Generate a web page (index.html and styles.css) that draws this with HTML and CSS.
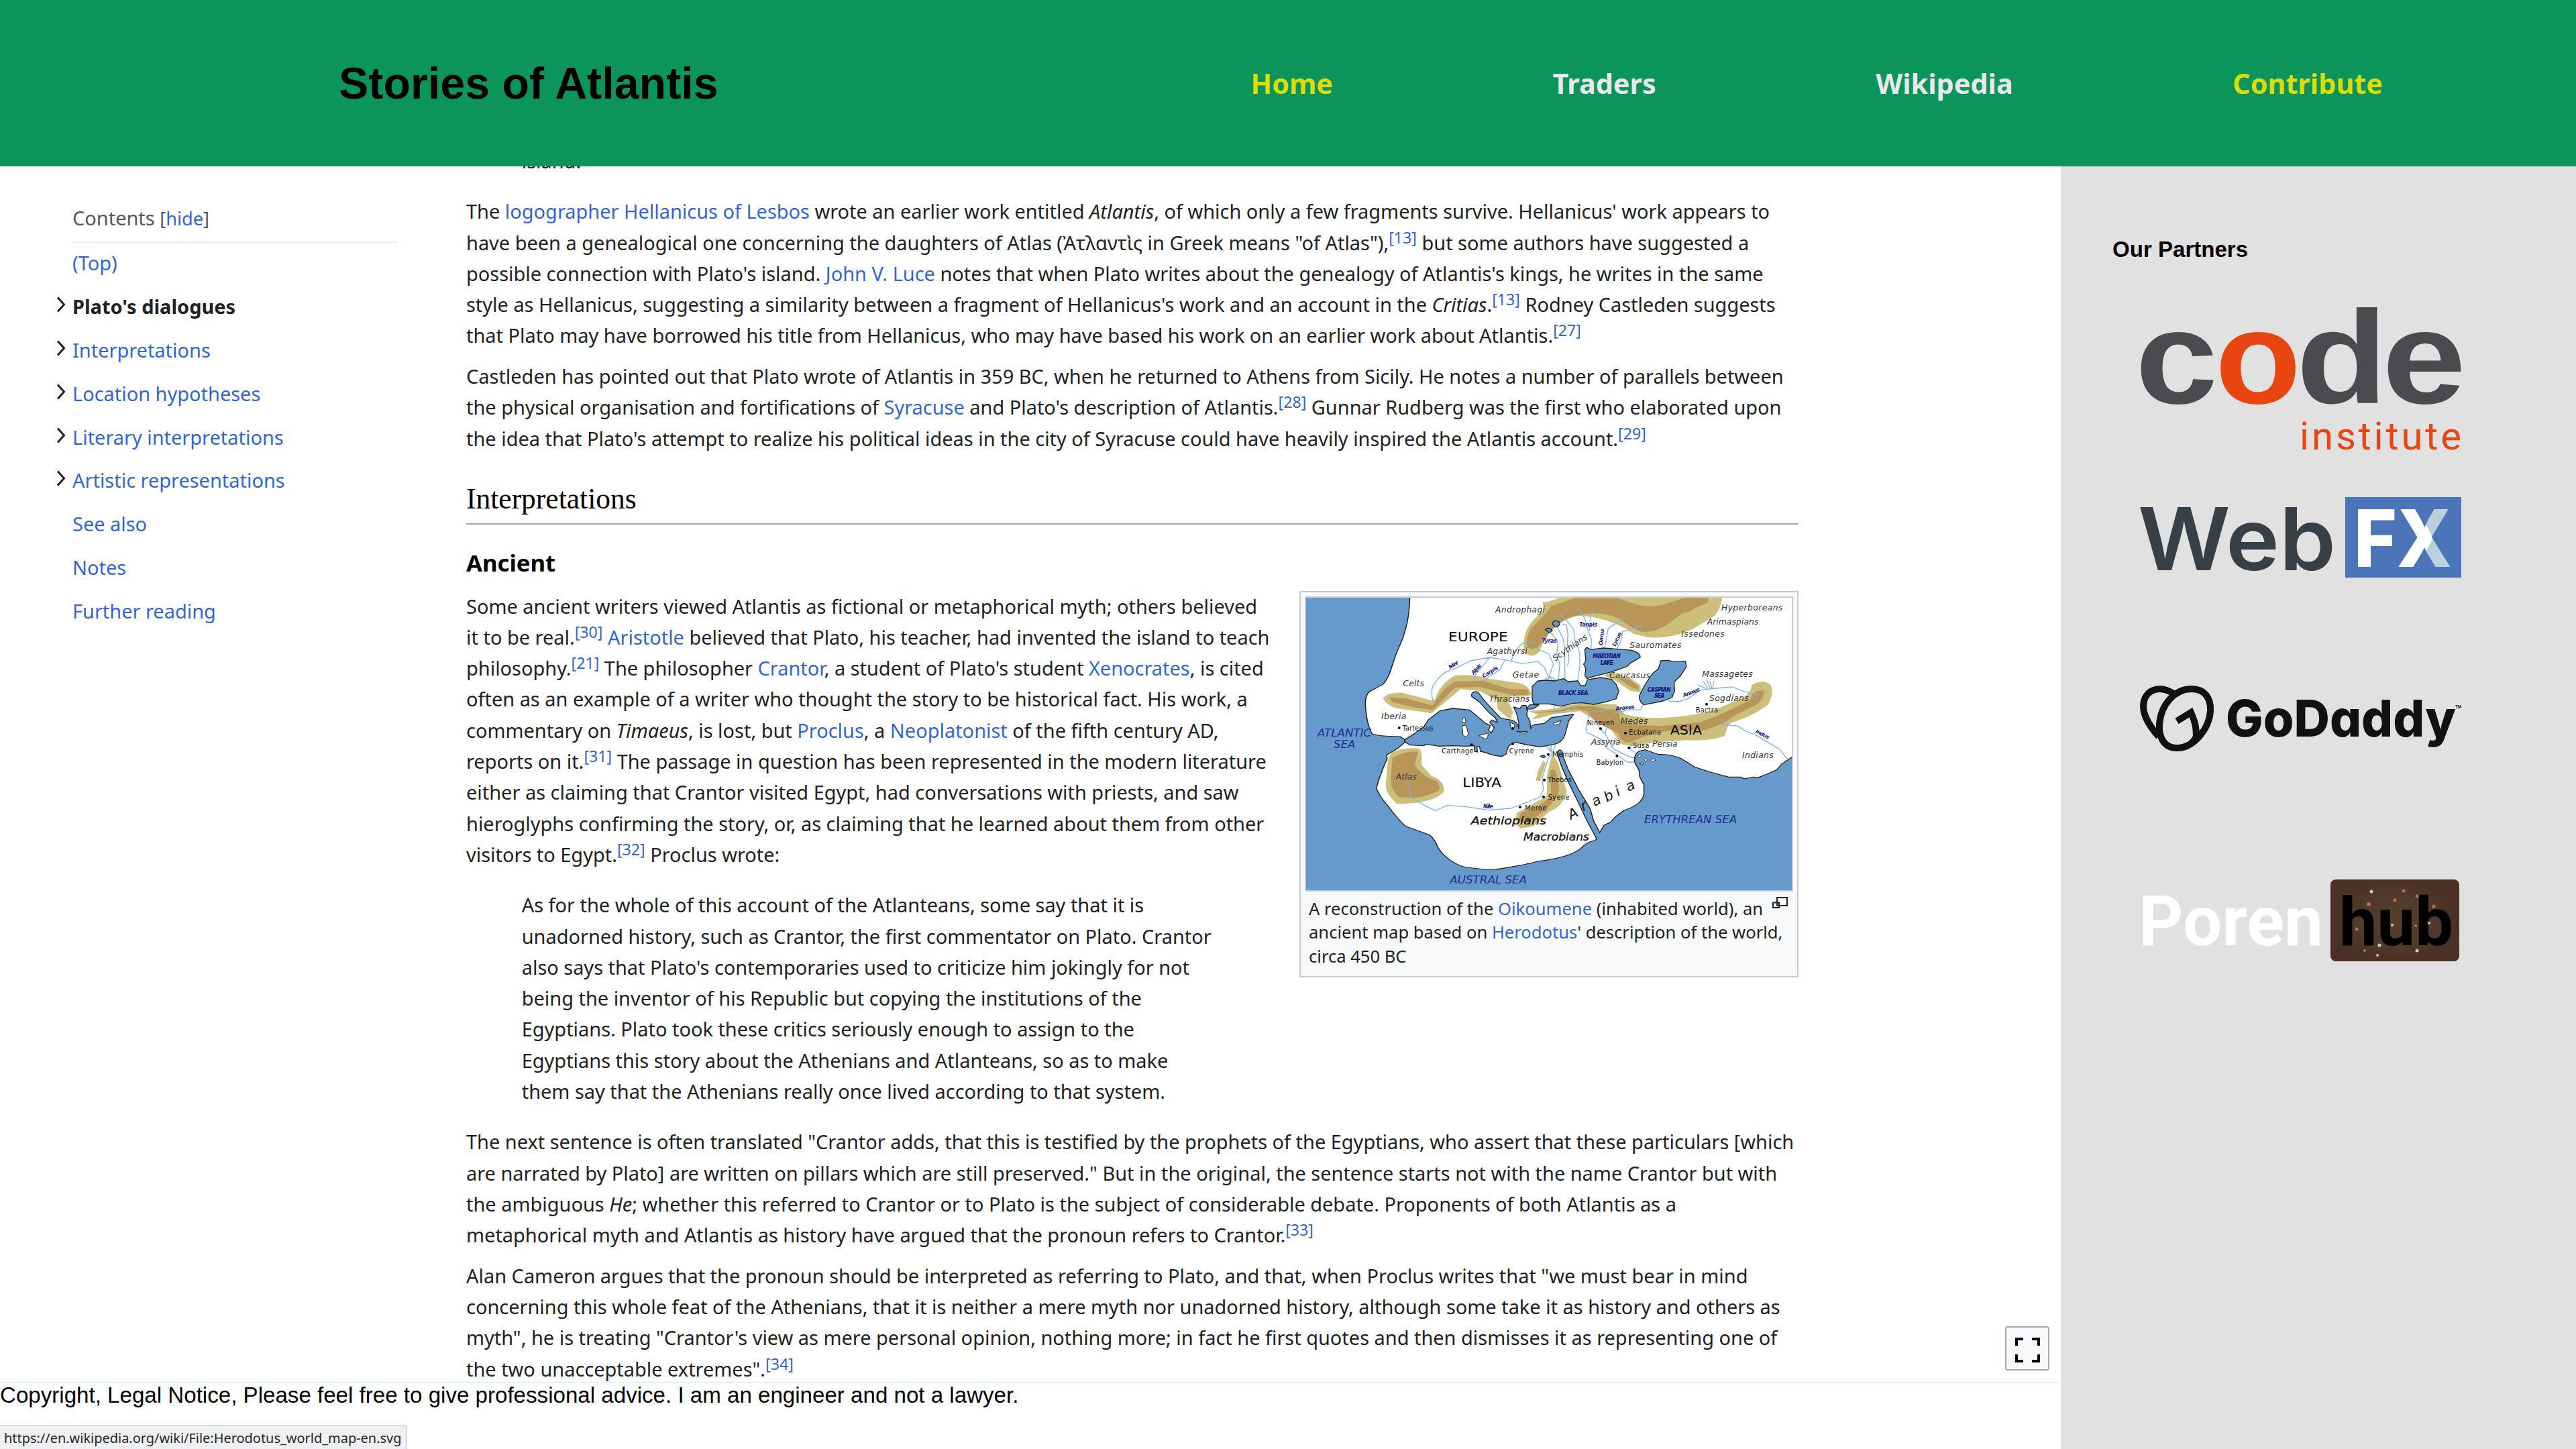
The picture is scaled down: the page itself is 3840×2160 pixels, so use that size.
FILE: index.html
```html
<!DOCTYPE html>
<html lang="en">
<head>
<meta charset="utf-8">
<title>Stories of Atlantis</title>
<link rel="stylesheet" href="styles.css">
</head>
<body>
<header class="top">
  <h1 class="brand">Stories of Atlantis</h1>
  <nav class="nav">
    <a class="nav-link accent">Home</a>
    <a class="nav-link">Traders</a>
    <a class="nav-link">Wikipedia</a>
    <a class="nav-link accent">Contribute</a>
  </nav>
</header>
<div class="page">
  <div class="main">
    <div class="reader">
      <aside class="toc">
        <div class="toc-head">Contents <span class="br">[<a>hide</a>]</span></div>
        <ul class="toc-list">
          <li><a>(Top)</a></li>
          <li class="current"><svg class="chev" viewBox="0 0 14 24"><path d="M2 1.5 11.5 12 2 22.5"/></svg>Plato's dialogues</li>
          <li><svg class="chev" viewBox="0 0 14 24"><path d="M2 1.5 11.5 12 2 22.5"/></svg><a>Interpretations</a></li>
          <li><svg class="chev" viewBox="0 0 14 24"><path d="M2 1.5 11.5 12 2 22.5"/></svg><a>Location hypotheses</a></li>
          <li><svg class="chev" viewBox="0 0 14 24"><path d="M2 1.5 11.5 12 2 22.5"/></svg><a>Literary interpretations</a></li>
          <li><svg class="chev" viewBox="0 0 14 24"><path d="M2 1.5 11.5 12 2 22.5"/></svg><a>Artistic representations</a></li>
          <li><a>See also</a></li>
          <li><a>Notes</a></li>
          <li><a>Further reading</a></li>
        </ul>
      </aside>
      <article class="article">
        <blockquote class="cut">island.</blockquote>
        <p>The <a>logographer Hellanicus of Lesbos</a> wrote an earlier work entitled <i>Atlantis</i>, of which only a few fragments survive. Hellanicus' work appears to<br>
        have been a genealogical one concerning the daughters of Atlas (Ἀτλαντὶς in Greek means "of Atlas"),<sup>[13]</sup> but some authors have suggested a<br>
        possible connection with Plato's island. <a>John V. Luce</a> notes that when Plato writes about the genealogy of Atlantis's kings, he writes in the same<br>
        style as Hellanicus, suggesting a similarity between a fragment of Hellanicus's work and an account in the <i>Critias</i>.<sup>[13]</sup> Rodney Castleden suggests<br>
        that Plato may have borrowed his title from Hellanicus, who may have based his work on an earlier work about Atlantis.<sup>[27]</sup></p>
        <p>Castleden has pointed out that Plato wrote of Atlantis in 359 BC, when he returned to Athens from Sicily. He notes a number of parallels between<br>
        the physical organisation and fortifications of <a>Syracuse</a> and Plato's description of Atlantis.<sup>[28]</sup> Gunnar Rudberg was the first who elaborated upon<br>
        the idea that Plato's attempt to realize his political ideas in the city of Syracuse could have heavily inspired the Atlantis account.<sup>[29]</sup></p>
        <h2>Interpretations</h2>
        <h3>Ancient</h3>
        <figure class="thumb">
          <svg class="map" viewBox="0 0 2172 1308">
            <rect class="water" width="2172" height="1308"/>
            <g transform="scale(1.5306 1.1862) translate(-55 -79)">
              <path class="land" d="M358 70C357 150 348 200 330 255C305 320 305 370 280 405L240 433Q228 445 228 480Q232 560 248 592Q265 602 330 603L344 615L343 624L325 645L290 672L292 685Q270 750 260 797Q270 830 295 865Q320 910 345 940L415 973Q432 990 440 1020Q460 1065 510 1092Q560 1105 610 1103Q700 1085 730 1073Q820 1060 855 1027Q875 1000 890 997Q905 993 903 985L890 955L870 905L850 850L820 770L800 710L790 670Q790 652 797 653Q805 655 805 675L820 725L850 800L885 875L895 920L913 965L925 937L945 925Q955 905 985 880Q1035 860 1042 820L1042 785L1030 755L1028 730L1015 700Q1012 665 1030 657L1045 652L1085 670Q1120 668 1150 685L1190 717L1240 738L1290 755L1325 755L1335 762L1360 755L1375 757L1400 745L1430 728L1445 705L1480 675V70Z"/>
            </g>
            <g transform="translate(216 267)">
              <path class="hill" d="M128 182Q150 155 215 158L345 192L360 190Q380 120 450 80Q540 75 600 95L740 115Q785 130 790 165Q780 180 700 175L690 200L710 245L700 268L722 272L690 274L640 230L635 190L560 150L475 142L345 250L210 230Q150 225 128 182Z"/>
              <path class="peak" d="M155 178L230 182L350 215Q400 130 450 108L580 105L690 140L770 143Q785 155 775 168L700 168L560 132L450 135L350 235L260 222L170 200Z"/>
              <path class="hill" d="M165 425Q230 400 290 408Q305 420 300 480L345 530Q405 550 400 600Q370 640 260 652L190 655Q140 610 140 570L150 460Z"/>
              <path class="peak" d="M170 450Q230 415 285 422L270 480Q300 530 370 555Q385 575 378 595Q310 630 250 628L200 625Q165 600 162 550Z"/>
              <path class="hill" d="M885 430L910 470L950 600Q930 670 870 690L800 755L740 765Q715 740 726 695L780 665L860 620L862 520Z M845 460L855 475L830 555L812 550L820 510Z"/>
              <path class="peak" d="M875 510Q890 490 900 510Q920 570 912 610L860 680L780 735Q740 745 735 720L745 695L830 660L880 620Z"/>
              <path class="river" d="M238 555L245 590L258 630L320 665L362 685L415 662L500 668L600 683L700 675L830 625L845 590L840 540L865 455L885 430M850 388L885 430L900 390M868 388L880 425L880 388"/>
              <path class="river" d="M355 205Q340 160 350 130Q380 80 410 65L450 50L520 15L605 0L670 10L750 28L820 18L850 45L870 90M535 108L540 80L585 25L605 0M582 112L590 95L650 55L675 8"/>
              <path class="lake" d="M225 368L270 340L310 310L330 280Q355 260 385 238L440 228L515 235L560 272L582 292L608 305L600 325L612 338L625 315L605 290L615 280L640 290L630 270L600 245L560 200L525 175Q520 153 545 153L555 158Q575 190 620 235L655 272L700 280Q720 285 730 300L735 320V290L725 250L712 222L740 230L750 215L768 215L775 235L770 255L785 285L788 320L795 305L810 300L850 295L880 270L925 262L980 255L958 285L942 345Q930 380 895 388L830 400L770 390L720 380L700 388Q685 395 680 430L660 443Q620 440 585 425L563 420L560 398H548L550 423L538 420L535 395L500 397L440 395L380 397L320 388L310 395L250 392L228 380Z"/>
              <path class="lake" d="M768 232L785 212L825 212L800 230Z M832 442L845 437L855 444L845 449Z"/>
              <path class="land" d="M482 305L500 303L510 345L498 357L485 345ZM482 290Q482 265 495 270Q500 290 495 294ZM556 350L598 338L596 360L585 365ZM695 290L718 300L712 320L700 315ZM725 330L775 332L760 339ZM888 295L925 282L915 300L895 303Z"/>
            </g>
            <g transform="translate(906 -3)">
              <path class="hill" d="M153 20L175 22L230 2H955Q945 60 920 85L820 145Q720 190 620 180L560 165Q480 110 400 95Q300 75 250 95Q170 150 140 240Q115 275 80 255Q60 240 70 180Q85 110 155 65Z"/>
              <path class="peak" d="M190 40Q240 25 290 5L490 5L560 30Q640 55 720 25L790 2H895L890 25L830 50L810 65L780 70L700 130Q650 160 600 155Q560 150 500 100Q420 60 330 78Q240 95 190 150L130 225Q100 245 80 215Q80 160 110 130L165 75Z"/>
              <path class="hill" d="M85 510L200 500L260 485L330 475L480 480L500 500L520 525Q620 550 760 535Q860 525 930 500L1050 450Q1090 420 1085 395Q1130 365 1170 390Q1190 430 1160 480Q1100 530 1000 560Q975 570 968 620Q900 645 800 640L640 650Q560 680 500 655L470 610L430 560L370 540L320 510L200 524L120 545H105L130 525Z"/>
              <path class="peak" d="M105 517L230 505L300 486L380 488L450 505L490 500L500 555Q600 580 700 575L860 560L980 510L1080 460Q1090 415 1140 418Q1145 450 1110 480L1030 520L950 570L880 595L700 600L600 625L540 650Q505 655 490 610L400 565L370 540L350 510L300 502L200 515Z"/>
              <path class="hill" d="M425 350L460 338L540 360L590 395L590 425L545 420L480 375Z"/>
              <path class="peak" d="M488 362L540 368L582 400L578 415L545 402Z"/>
              <path class="river" d="M110 200L60 208L20 250L12 290M110 225L180 255L200 300L180 360M185 155L220 200L215 260L228 300L222 370M215 130L245 190L250 230L252 370M222 72L260 105L290 145L295 190L318 250V310L308 375M240 120L258 125L265 170L262 200L270 280L262 310M305 42L340 95L355 150L370 190L368 235M378 55L365 85L362 150M515 95L445 140L430 225M598 127L510 155L500 200L483 232M160 375Q180 345 210 372M172 378L185 355L195 375"/>
              <path class="river" d="M205 485L203 515L230 515L295 495M460 500L420 508L362 512L345 590L350 605L420 640L440 675L530 738H562M470 522L540 503L590 505L600 482M385 550L410 590L430 610L470 680L530 710L560 720M430 615L440 575M500 620L470 650L460 675M552 648L545 680L565 695M715 465L760 468L800 455L860 415L930 408L1000 402L1050 422L1115 438M885 410L845 393M890 405L868 375M900 405L885 370M908 408L900 375M912 408L918 375M942 567L1025 577L1060 600L1110 620L1210 680L1247 725"/>
              <path class="lake" d="M105 400L130 375L165 372L205 375L245 365L265 378L310 375L322 396L342 396L352 370L410 360L460 368L480 390L493 420L480 455L430 470L380 480L330 473L290 475L235 488L180 478L110 478L105 450Z"/>
              <path class="lake" d="M340 235L350 225L365 235L425 228L480 232L550 238Q590 250 588 270L545 295L530 310L460 335L380 355L350 365L341 350L345 320L335 300L345 285Z"/>
              <path class="lake" d="M680 285L715 283L735 290L790 287L795 310L770 350L740 380L742 420L730 450L690 465L605 482Q580 465 585 440L605 400L640 345L670 320Z"/>
              <path class="lake" d="M212 106Q230 108 228 122L218 134H206L196 120Q198 106 212 106ZM163 145Q180 132 195 150L180 160Z"/>
              <path class="land" d="M575 712Q590 700 595 708L585 718ZM604 728Q612 718 624 726L612 736ZM634 730Q646 716 656 730L644 736ZM584 742L604 744L596 752Z"/>
              <g class="dots"><circle cx="411" cy="589" r="6"/><circle cx="522" cy="608" r="6"/><circle cx="538" cy="674" r="6"/><circle cx="484" cy="711" r="6"/><circle cx="885" cy="479" r="6"/><circle cx="177" cy="704" r="6"/><circle cx="159" cy="818" r="6"/><circle cx="156" cy="894" r="6"/><circle cx="51" cy="940" r="6"/><circle cx="18" cy="656" r="6"/><circle cx="-490" cy="585" r="6"/><circle cx="-166" cy="661" r="6"/><circle cx="18" cy="588" r="6"/></g>
              <g class="folk">
                <text x="-60" y="68" textLength="222">Androphagi</text>
                <text x="951" y="61" textLength="274">Hyperboreans</text>
                <text x="887" y="123" textLength="230">Arimaspians</text>
                <text x="772" y="176" textLength="193">Issedones</text>
                <text x="541" y="228" textLength="231">Sauromates</text>
                <text x="-97" y="256" textLength="180">Agathyrsi</text>
                <text x="17" y="361" textLength="118">Getae</text>
                <text x="450" y="362" textLength="182">Caucasus</text>
                <text x="865" y="356" textLength="226">Massagetes</text>
                <text x="897" y="464" textLength="176">Sogdians</text>
                <text x="-88" y="469" textLength="182">Thracians</text>
                <text x="500" y="568" textLength="122">Medes</text>
                <text x="369" y="661" textLength="131">Assyria</text>
                <text x="642" y="668" textLength="113">Persia</text>
                <text x="1044" y="720" textLength="140">Indians</text>
                <text x="-473" y="399" textLength="95">Celts</text>
                <text x="-570" y="547" textLength="112">Iberia</text>
                <text x="-505" y="815" textLength="94">Atlas</text>
                <text transform="translate(207 288)rotate(-35)" textLength="180">Scythians</text>
              </g>
              <g class="town">
                <text x="350" y="574" textLength="122">Nineveh</text>
                <text x="538" y="614" textLength="143">Ecbatana</text>
                <text x="555" y="676" textLength="73">Susa</text>
                <text x="392" y="751" textLength="121">Babylon</text>
                <text x="836" y="516" textLength="100">Bactra</text>
                <text x="196" y="714" textLength="137">Memphis</text>
                <text x="174" y="828" textLength="107">Thebes</text>
                <text x="176" y="905" textLength="95">Syene</text>
                <text x="73" y="955" textLength="96">Meroe</text>
                <text x="2" y="699" textLength="111">Cyrene</text>
                <text x="-299" y="699" textLength="141">Carthage</text>
                <text x="-475" y="597" textLength="138">Tartessus</text>
              </g>
              <g class="stream">
                <text x="316" y="132" textLength="80">Tanais</text>
                <text x="149" y="205" textLength="67">Tyras</text>
                <text transform="translate(419 216)rotate(-84)" textLength="74">Oarus</text>
                <text transform="translate(476 222)rotate(-64)" textLength="68">Lycus</text>
                <text transform="translate(-263 322)rotate(-32)" textLength="48">Ister</text>
                <text transform="translate(-157 348)rotate(-48)" textLength="54">Alpis</text>
                <text transform="translate(-112 362)rotate(-32)" textLength="78">Carpis</text>
                <text transform="translate(782 448)rotate(-21)" textLength="80">Araxes</text>
                <text transform="translate(479 507)rotate(-6)" textLength="85">Araxes</text>
                <text transform="translate(1102 606)rotate(27)" textLength="66">Indus</text>
                <text x="-114" y="945" textLength="44">Nile</text>
              </g>
              <g class="basin">
                <text x="376" y="274" textLength="125">MAEOTIAN</text>
                <text x="410" y="302" textLength="59">LAKE</text>
                <text x="221" y="438" textLength="134">BLACK SEA</text>
                <text x="620" y="423" textLength="105">CASPIAN</text>
                <text x="651" y="450" textLength="46">SEA</text>
              </g>
              <g class="land-name">
                <text x="722" y="616" textLength="142" lengthAdjust="spacingAndGlyphs">ASIA</text>
                <text x="-270" y="199" textLength="266" lengthAdjust="spacingAndGlyphs">EUROPE</text>
                <text x="-206" y="849" textLength="172" lengthAdjust="spacingAndGlyphs">LIBYA</text>
              </g>
            </g>
            <g class="ocean">
              <text x="50" y="621" textLength="242" lengthAdjust="spacingAndGlyphs">ATLANTIC</text>
              <text x="124" y="671" textLength="96" lengthAdjust="spacingAndGlyphs">SEA</text>
              <text x="1512" y="1007" textLength="414" lengthAdjust="spacingAndGlyphs">ERYTHREAN SEA</text>
              <text x="643" y="1279" textLength="344" lengthAdjust="spacingAndGlyphs">AUSTRAL SEA</text>
            </g>
            <g class="south">
              <text x="737" y="1014" textLength="337" lengthAdjust="spacingAndGlyphs">Aethiopians</text>
              <text x="972" y="1086" textLength="294" lengthAdjust="spacingAndGlyphs">Macrobians</text>
            </g>
            <g class="arabia">
              <text transform="translate(1184 994)rotate(-28)">A</text>
              <text transform="translate(1240 955)rotate(-28)">r</text>
              <text transform="translate(1290 934)rotate(-28)">a</text>
              <text transform="translate(1345 914)rotate(-28)">b</text>
              <text transform="translate(1395 888)rotate(-28)">i</text>
              <text transform="translate(1442 868)rotate(-28)">a</text>
            </g>
          </svg>
          <figcaption>
            <svg class="enlarge" viewBox="0 0 23 17"><path d="M7 1H22V13H7zM1 8.500H10V16H1z"/></svg>
            A reconstruction of the <a>Oikoumene</a> (inhabited world), an<br>ancient map based on <a>Herodotus</a>' description of the world,<br>circa 450 BC
          </figcaption>
        </figure>
        <p>Some ancient writers viewed Atlantis as fictional or metaphorical myth; others believed<br>
        it to be real.<sup>[30]</sup> <a>Aristotle</a> believed that Plato, his teacher, had invented the island to teach<br>
        philosophy.<sup>[21]</sup> The philosopher <a>Crantor</a>, a student of Plato's student <a>Xenocrates</a>, is cited<br>
        often as an example of a writer who thought the story to be historical fact. His work, a<br>
        commentary on <i>Timaeus</i>, is lost, but <a>Proclus</a>, a <a>Neoplatonist</a> of the fifth century AD,<br>
        reports on it.<sup>[31]</sup> The passage in question has been represented in the modern literature<br>
        either as claiming that Crantor visited Egypt, had conversations with priests, and saw<br>
        hieroglyphs confirming the story, or, as claiming that he learned about them from other<br>
        visitors to Egypt.<sup>[32]</sup> Proclus wrote:</p>
        <blockquote>As for the whole of this account of the Atlanteans, some say that it is<br>
        unadorned history, such as Crantor, the first commentator on Plato. Crantor<br>
        also says that Plato's contemporaries used to criticize him jokingly for not<br>
        being the inventor of his Republic but copying the institutions of the<br>
        Egyptians. Plato took these critics seriously enough to assign to the<br>
        Egyptians this story about the Athenians and Atlanteans, so as to make<br>
        them say that the Athenians really once lived according to that system.</blockquote>
        <p>The next sentence is often translated "Crantor adds, that this is testified by the prophets of the Egyptians, who assert that these particulars [which<br>
        are narrated by Plato] are written on pillars which are still preserved." But in the original, the sentence starts not with the name Crantor but with<br>
        the ambiguous <i>He</i>; whether this referred to Crantor or to Plato is the subject of considerable debate. Proponents of both Atlantis as a<br>
        metaphorical myth and Atlantis as history have argued that the pronoun refers to Crantor.<sup>[33]</sup></p>
        <p>Alan Cameron argues that the pronoun should be interpreted as referring to Plato, and that, when Proclus writes that "we must bear in mind<br>
        concerning this whole feat of the Athenians, that it is neither a mere myth nor unadorned history, although some take it as history and others as<br>
        myth", he is treating "Crantor's view as mere personal opinion, nothing more; in fact he first quotes and then dismisses it as representing one of<br>
        the two unacceptable extremes".<sup>[34]</sup></p>
      </article>
      <button class="full" aria-label="Full screen"><svg viewBox="0 0 37 37"><path d="M0 0H12V4H4V12H0zM25 0H37V12H33V4H25zM0 25H4V33H12V37H0zM33 25H37V37H25V33H33z"/></svg></button>
    </div>
    <footer class="foot">Copyright, Legal Notice, Please feel free to give professional advice. I am an engineer and not a lawyer.</footer>
  </div>
  <aside class="partners">
    <h4>Our Partners</h4>
    <svg class="logo code" viewBox="0 0 480 212">
      <g class="code-word">
        <text x="-7" y="141" textLength="123" lengthAdjust="spacingAndGlyphs">c</text>
        <text class="o" x="112" y="141" textLength="128" lengthAdjust="spacingAndGlyphs">o</text>
        <text x="233" y="141" textLength="136" lengthAdjust="spacingAndGlyphs">d</text>
        <text x="361" y="141" textLength="125" lengthAdjust="spacingAndGlyphs">e</text>
      </g>
      <text class="inst" x="238" y="210" textLength="241">institute</text>
    </svg>
    <svg class="logo webfx" viewBox="0 0 480 120">
      <text class="web" x="-3" y="109" textLength="295" lengthAdjust="spacingAndGlyphs">Web</text>
      <rect x="306" width="173" height="120"/>
      <text class="fx" x="319" y="104" textLength="64" lengthAdjust="spacingAndGlyphs">F</text>
      <clipPath id="chevron"><path d="M380 10H410L437 61L410 110H380L410 61z"/></clipPath>
      <text class="fx pale" x="383" y="104" textLength="82" lengthAdjust="spacingAndGlyphs">X</text>
      <text class="fx" x="383" y="104" textLength="82" lengthAdjust="spacingAndGlyphs" clip-path="url(#chevron)">X</text>
    </svg>
    <svg class="logo godaddy" viewBox="0 0 480 98">
      <path class="heart" d="M28 76C10 56 5 40 5 31C5 8 27-3 50 12M55 93C35 93 28 76 29 58C31 28 52 5 77 5C96 5 106 18 105 38C103 65 80 93 55 93M84 76C78 88 69 93 55 93M84 82C84 66 84 58 76 40L55 53"/>
      <text class="gd" x="128" y="76" textLength="343" lengthAdjust="spacingAndGlyphs">GoDaddy</text>
      <text class="tm" x="470" y="34" textLength="9" lengthAdjust="spacingAndGlyphs">TM</text>
    </svg>
    <svg class="logo poren" viewBox="0 0 480 124">
      <defs><radialGradient id="choc" cx="50%" cy="50%" r="50%"><stop offset="0" stop-color="#54402c"/><stop offset=".6" stop-color="#503a2a"/><stop offset="1" stop-color="#4b3025"/></radialGradient></defs>
      <rect x="284" y="1" width="192" height="122" rx="8" fill="url(#choc)"/>
      <g class="crumb"><circle cx="345" cy="19" r="2.500"/><circle class="r" cx="393" cy="18" r="2.500"/><circle class="r" cx="380" cy="32" r="2.500"/><circle class="r" cx="341" cy="38" r="3"/><circle class="r" cx="413" cy="26" r="2.500"/><circle class="r" cx="438" cy="41" r="2.500"/><circle class="r" cx="323" cy="75" r="2.500"/><circle cx="357" cy="99" r="2.500"/><circle cx="413" cy="107" r="2.500"/><circle cx="354" cy="114" r="2"/><circle class="r" cx="335" cy="107" r="2"/></g>
      <text class="po" x="-2" y="99" textLength="275" lengthAdjust="spacingAndGlyphs">Poren</text>
      <text class="hub" x="297" y="99" textLength="170" lengthAdjust="spacingAndGlyphs">hub</text>
      <g class="crumb"><circle cx="376" cy="69" r="2"/><circle class="r" cx="411" cy="70" r="2"/><circle cx="431" cy="66" r="2"/></g>
    </svg>
  </aside>
</div>
<div class="status">https://en.wikipedia.org/wiki/File:Herodotus_world_map-en.svg</div>
</body>
</html>
```
FILE: styles.css
```css
* { box-sizing: border-box; }
body {
  margin: 0;
  height: 2160px;
  overflow: hidden;
  display: flex;
  flex-direction: column;
  background: #fff;
  color: #202122;
  font: 28.95px/46.3px "Noto Sans", sans-serif;
}
a, sup { color: #3366cc; }

.top {
  flex: none;
  height: 248px;
  background: #0b955a;
  display: flex;
  align-items: center;
  justify-content: space-between;
  padding: 0 288px 0 505px;
}
.brand {
  margin: 0;
  color: #000;
  font: bold 66.4px/76px "Liberation Sans", Arial, sans-serif;
}
.nav { display: flex; gap: 327.3px; }
.nav-link { font-size: 41.4px; font-weight: bold; line-height: 56px; color: #e9e9ec; }
.nav-link.accent { color: #dcdc0a; }

.page { flex: 1; min-height: 0; display: flex; }
.main { width: 3072px; display: flex; flex-direction: column; }
.reader {
  position: relative;
  flex: none;
  height: 1813px;
  overflow: hidden;
  display: flex;
  border-bottom: 1px solid #c9f7dc;
}

.toc { width: 695px; padding: 54px 102px 0 108px; }
.toc-head { color: #54595d; height: 60px; border-bottom: 2px solid #eaecf0; }
.br { font-size: 27.2px; }
.toc-list { list-style: none; margin: 0; padding: 7px 0 0; }
.toc-list li { position: relative; height: 64.9px; white-space: nowrap; }
.toc-list .current { font-weight: bold; }
.chev { position: absolute; left: -24px; top: 8px; width: 14px; height: 24px; fill: none; stroke: #202122; stroke-width: 3; }

.article { width: 1986px; white-space: nowrap; }
.article p { margin: 14.4px 0; }
.article blockquote { margin: 29px 0; padding: 0 82.7px; }
.article .cut { margin-top: -31px; }
.article i { font-style: italic; }
sup { font-size: 80%; line-height: 0; vertical-align: 10px; }
h2 {
  margin: 36.5px 0 0;
  padding-bottom: 7px;
  border-bottom: 2px solid #a2a9b1;
  color: #000;
  font: 43.5px/59.6px "Liberation Serif", serif;
}
h3 { margin: 28.5px 0 0; color: #000; font-size: 34.7px; line-height: 55.5px; }

.thumb {
  float: right;
  width: 744px;
  height: 576px;
  margin: 14.4px 0 0;
  padding: 6px;
  border: 2px solid #c8ccd1;
  background: #f8f9fa;
}
.map { display: block; width: 728px; height: 440px; border: 2px solid #c8ccd1; }
figcaption { position: relative; padding: 8px 6px; font-size: 25.58px; line-height: 35.9px; }
.enlarge { position: absolute; right: 8px; top: 8px; width: 23px; height: 17px; fill: #fff; stroke: #202122; stroke-width: 2; }

.map text { font-family: "DejaVu Sans", sans-serif; }
.water { fill: #6699cc; }
.land { fill: #fff; stroke: #222; stroke-width: 3; }
.lake { fill: #6699cc; stroke: #222; stroke-width: 4; stroke-linejoin: round; }
.hill { fill: #ccbf7c; }
.peak { fill: #b8965a; }
.river { fill: none; stroke: #7fb2e5; stroke-width: 4; stroke-linejoin: round; }
.folk { font-size: 37px; font-style: italic; fill: #333; }
.town { font-size: 29px; fill: #111; }
.stream { font-size: 24px; font-style: italic; font-weight: bold; fill: #1a1a80; }
.basin { font-size: 24px; font-style: italic; font-weight: bold; fill: #10107c; }
.land-name { font-size: 60px; fill: #000; }
.ocean { font-size: 50px; font-style: italic; fill: #20308c; }
.south { font-size: 49px; font-style: italic; fill: #111; stroke: #111; stroke-width: 1; }
.arabia { font-size: 62px; font-style: italic; fill: #111; }

.full {
  position: absolute;
  left: 2989px;
  top: 1729px;
  width: 66px;
  height: 66px;
  padding: 13px;
  border: 2px solid #a2a9b1;
  border-radius: 4px;
  background: #f8f9fa;
}
.full svg { display: block; width: 37px; height: 37px; margin-top: 2px; }

.foot { color: #000; font: 33.12px/38px "Liberation Sans", Arial, sans-serif; white-space: nowrap; }

.partners {
  width: 768px;
  background: #e1e1e1;
  padding: 105px 0 0 77px;
  display: flex;
  flex-direction: column;
}
.partners h4 { margin: 0; color: #000; font: bold 33.07px/38px "Liberation Sans", Arial, sans-serif; }
.logo { flex: none; width: 480px; margin-left: 41px; overflow: visible; }
.code { height: 212px; margin-top: 69px; }
.code-word { font: bold 197px "Liberation Sans", sans-serif; fill: #4b4a4f; }
.code-word .o { fill: #e84610; }
.inst { font: 58px Roboto, sans-serif; fill: #e84610; }
.webfx { height: 120px; margin-top: 69px; }
.webfx rect { fill: #4b74b9; }
.web { font: 600 129px Inter, sans-serif; fill: #374047; }
.fx { font: 800 118px Inter, sans-serif; fill: #fff; }
.fx.pale { fill: #bccfdd; }
.godaddy { height: 98px; margin-top: 161px; }
.heart { fill: none; stroke: #111; stroke-width: 10; stroke-linejoin: miter; }
.gd { font: 800 76px Inter, sans-serif; font-feature-settings: "cv11"; fill: #111; }
.tm { font: bold 7px "Liberation Sans", sans-serif; fill: #111; }
.poren { height: 124px; margin-top: 190px; }
.po { font: bold 103px Roboto, sans-serif; fill: #fff; }
.hub { font: bold 100px Roboto, sans-serif; fill: #000; }
.crumb { fill: #d8c8b0; }
.crumb .r { fill: #c06a50; }

.status {
  position: absolute;
  left: 0;
  bottom: 0;
  width: 607px;
  height: 35px;
  padding-left: 6px;
  border: 1px solid #b4b6b8;
  border-width: 1px 1px 0 0;
  border-radius: 0 5px 0 0;
  background: #eff0f1;
  color: #232629;
  font-size: 19.95px;
  line-height: 35px;
  white-space: nowrap;
}
```
